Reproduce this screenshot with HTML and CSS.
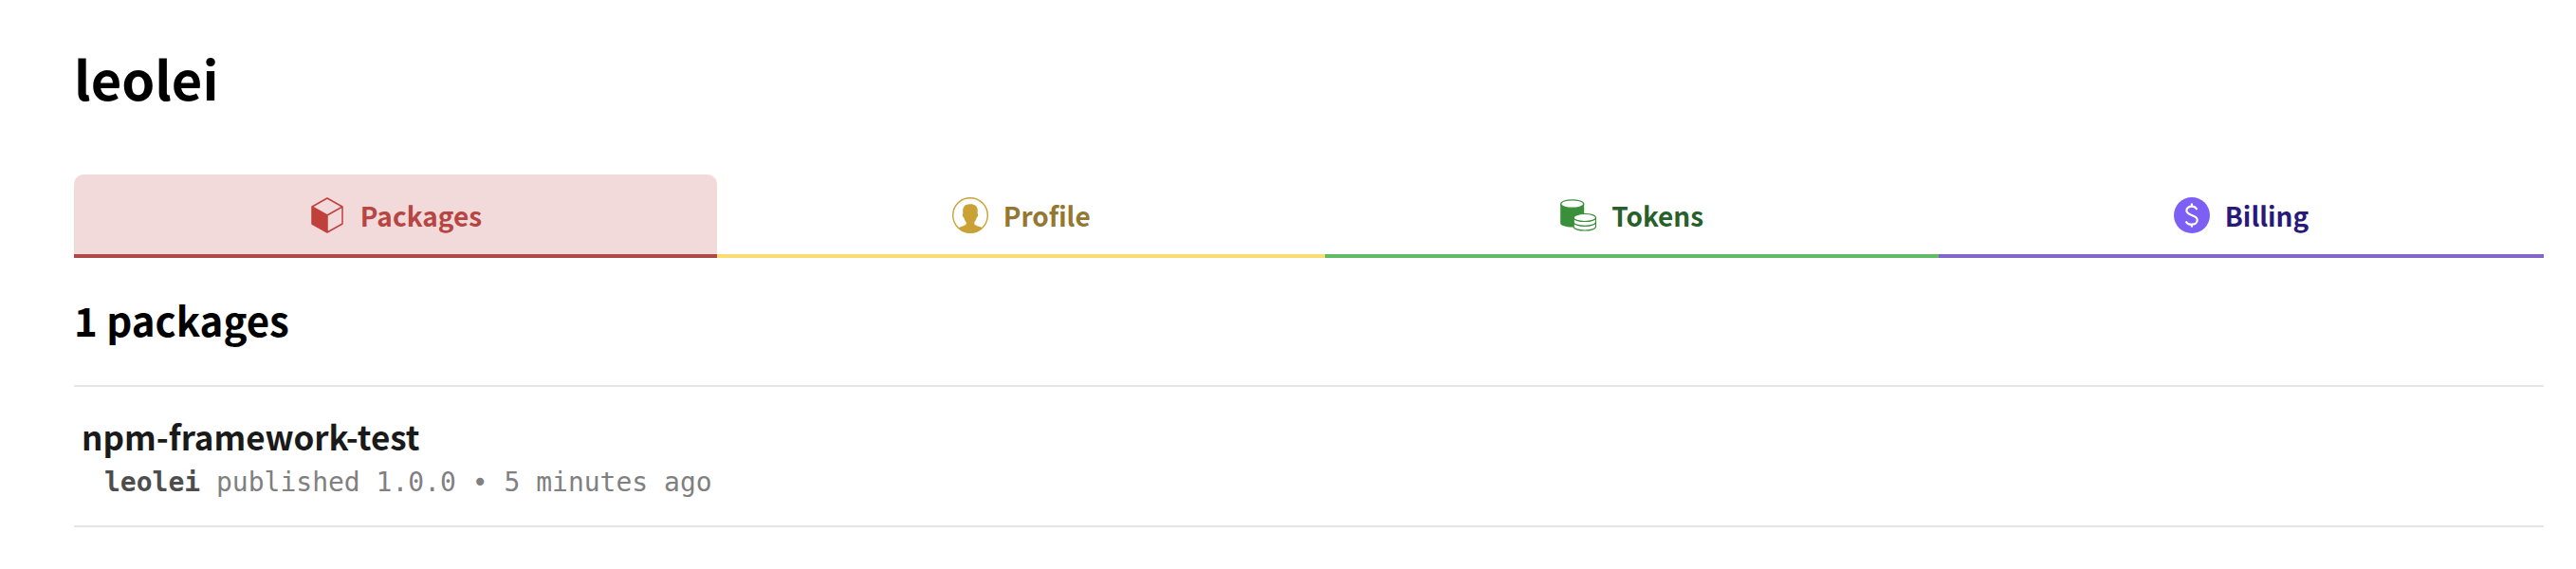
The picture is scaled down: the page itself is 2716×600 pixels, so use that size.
FILE: index.html
```html
<!DOCTYPE html>
<html lang="en">
<head>
    <meta charset="UTF-8">
    <meta name="viewport" content="width=device-width, initial-scale=1.0">
    <title>leolei</title>
    <link rel="stylesheet" href="styles.css">
</head>
<body>

    <main class="container">
        <h1 class="username">leolei</h1>

        <nav class="tabs">
            <a class="tab packages active" href="#packages">
                <svg class="icon" width="38" height="38" viewBox="-2 0 38 38">
                    <path d="M1 10 17 19V37L1 28Z" fill="#c0403c"/>
                    <path d="M17 1 33 10V28L17 37 1 28V10ZM1 10 17 19 33 10M17 19V37" fill="none" stroke="#c0403c" stroke-width="1.5" stroke-linejoin="round"/>
                </svg>
                Packages
            </a>
            <a class="tab profile" href="#profile">
                <svg class="icon" width="38" height="38" viewBox="0 0 38 38">
                    <circle cx="19" cy="19" r="18.3" fill="none" stroke="#c9a135" stroke-width="1.4"/>
                    <path d="M19 7.3c5.4 0 8.1 2.7 7.8 7.5l-.2 2.2c.9.2.9 3.6-.9 4.6-.5 2.1-1.3 3.5-2.4 4.7v2c1.3 2.2 5.8 2.3 8.6 4.2A18.5 18.5 0 0 1 19 37.6 18.5 18.5 0 0 1 6.1 32.5c2.8-1.9 7.3-2 8.6-4.2v-2c-1.1-1.2-1.9-2.6-2.4-4.7-1.8-1-1.8-4.400-.9-4.600l-.2-2.200c-.3-4.800 2.400-7.500 7.800-7.500z" fill="#c9a135"/>
                </svg>
                Profile
            </a>
            <a class="tab tokens" href="#tokens">
                <svg class="icon" width="38" height="34" viewBox="0 0 38 34">
                    <path d="M.2 5v20.5c0 2 5.5 4 12.500 4s12.500-2 12.500-4V5z" fill="#3a8f3a"/>
                    <ellipse cx="12.7" cy="5" rx="12" ry="4.2" fill="#fff" stroke="#3a8f3a" stroke-width="1.2"/>
                    <path d="M14.2 19.5v9.5c0 2.200 5 4 11.700 4s11.600-1.800 11.600-4v-9.500c0-2.200-5-4-11.600-4s-11.700 1.800-11.700 4z" fill="#fff" stroke="#3a8f3a" stroke-width="1.2"/>
                    <path d="M14.2 19.5c0 2.200 5 4 11.700 4s11.600-1.800 11.600-4M14.200 24.300c0 2.200 5 4 11.700 4s11.600-1.800 11.600-4" fill="none" stroke="#3a8f3a" stroke-width="1.2"/>
                </svg>
                Tokens
            </a>
            <a class="tab billing" href="#billing">
                <svg class="icon" width="38" height="38" viewBox="0 0 38 38">
                    <circle cx="19" cy="19" r="19" fill="#7d5ff5"/>
                    <path d="M24.3 13.2C23.4 10.8 21.5 9.6 18.9 9.6c-3.3 0-5.5 1.8-5.5 4.5 0 6 11.3 3.7 11.3 9.9 0 2.8-2.3 4.7-5.7 4.7-2.9 0-5.2-1.2-6.3-3.3M18.9 6.5v3.2M18.9 28.6v2.9" fill="none" stroke="#fff" stroke-width="2.2"/>
                </svg>
                Billing
            </a>
        </nav>

        <section id="packages">
            <h2 class="count">1 packages</h2>
            <ul class="package-list">
                <li class="package">
                    <h3 class="package-name"><a href="#npm-framework-test">npm-framework-test</a></h3>
                    <p class="package-meta"><a href="#leolei">leolei</a> published 1.0.0 • 5 minutes ago</p>
                </li>
            </ul>
        </section>
    </main>

</body>
</html>
```
FILE: styles.css
```css
* {
    box-sizing: border-box;
}
body {
    margin: 0;
    background: #fff;
    color: #000;
    font-family: "Noto Sans CJK SC", "Open Sans", sans-serif;
    font-weight: 600;
}
h1, h2, h3, p, ul {
    margin: 0;
    padding: 0;
    font-weight: inherit;
}
a {
    color: inherit;
    text-decoration: none;
}
.container {
    padding: 46px 34px 44px 78px;
}
.username {
    font-size: 56px;
    line-height: 72px;
}
.tabs {
    display: flex;
    margin-top: 66px;
}
.tab {
    flex: 1 1 auto;
    display: flex;
    align-items: center;
    justify-content: center;
    gap: 16px;
    height: 88px;
    padding-top: 2px;
    border-bottom: 4px solid;
    border-radius: 10px 10px 0 0;
    font-size: 28px;
    line-height: 40px;
}
.icon {
    flex: none;
}
.packages {
    color: #b74642;
    border-color: #ad4a48;
}
.packages.active {
    background: #f1dad9;
}
.profile {
    color: #947831;
    border-color: #fbdc72;
}
.tokens {
    color: #27602a;
    border-color: #60ba66;
}
.billing {
    color: #29197a;
    border-color: #8265c8;
}
.count {
    padding: 38px 0 42px;
    font-size: 42px;
    line-height: 54px;
}
.package-list {
    list-style: none;
}
.package {
    padding: 28px 8px;
    border-bottom: 2px solid #e5e5e5;
}
.package:first-child {
    border-top: 2px solid #e5e5e5;
}
.package-name {
    font-size: 35px;
    line-height: 48px;
    color: #1a1a1a;
}
.package-meta {
    padding: 8px 0 0 24px;
    font-family: "DejaVu Sans Mono", monospace;
    font-size: 28px;
    line-height: 34px;
    font-weight: 400;
    color: #808080;
}
.package-meta a {
    font-weight: bold;
    color: #4d4d4d;
}
```
